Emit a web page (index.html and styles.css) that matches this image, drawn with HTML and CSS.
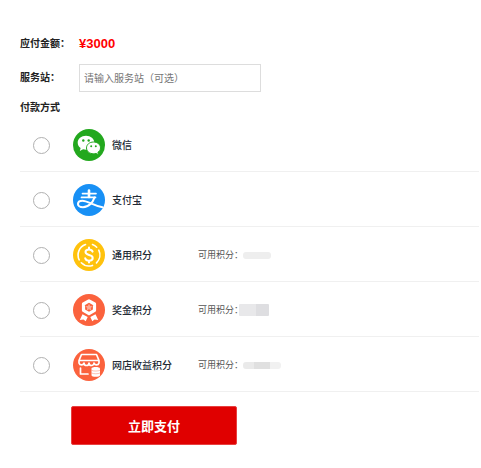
FILE: index.html
```html
<!DOCTYPE html>
<html lang="zh-CN">
<head>
    <meta charset="utf-8">
    <meta name="viewport" content="width=device-width, initial-scale=1">
    <title>立即支付</title>
    <link rel="stylesheet" href="styles.css">
</head>
<body>
    <form class="pay-form">
        <div class="form-row amount-row">
            <span class="form-label">应付金额：</span>
            <span class="amount">¥3000</span>
        </div>
        <div class="form-row">
            <label class="form-label" for="station">服务站：</label>
            <input type="text" class="station-input" id="station" name="station" placeholder="请输入服务站（可选）">
        </div>

        <h2 class="pay-title">付款方式</h2>
        <div class="pay-list">
            <!-- 微信 -->
            <label class="pay-item">
                <input type="radio" class="pay-radio" name="pay_type" value="wechat">
                <svg class="pay-icon" viewBox="0 0 32 32" aria-hidden="true">
                    <circle cx="16" cy="16" r="16" fill="#23a81e"/>
                    <path d="M13 6.800c-4.700 0-8.300 3.100-8.300 6.900 0 2.200 1.100 4.100 2.900 5.300L6.800 22l3.300-1.700c.9.300 1.900.4 2.900.4 4.700 0 8.300-3.100 8.300-6.900S17.700 6.800 13 6.800z" fill="#fff"/>
                    <path d="M20.500 13c-4 0-7 2.600-7 5.900s3 5.900 7 5.900c.9 0 1.700-.1 2.400-.4l2.700 1.400-.7-2.500c1.600-1 2.600-2.600 2.600-4.400 0-3.300-3-5.900-7-5.900z" fill="#fff" stroke="#23a81e"/>
                    <g fill="#23a81e">
                        <circle cx="10.300" cy="11.500" r="1.200"/>
                        <circle cx="15.700" cy="11.500" r="1.200"/>
                        <circle cx="18.200" cy="17.200" r="1"/>
                        <circle cx="22.800" cy="17.200" r="1"/>
                    </g>
                </svg>
                <span class="pay-name">微信</span>
            </label>
            <!-- 支付宝 -->
            <label class="pay-item">
                <input type="radio" class="pay-radio" name="pay_type" value="alipay">
                <svg class="pay-icon" viewBox="0 0 32 32" aria-hidden="true">
                    <circle cx="16" cy="16" r="16" fill="#1890f5"/>
                    <g fill="none" stroke="#fff" stroke-linecap="round">
                        <path d="M9.500 9.600h13.500M8.500 13.400h14" stroke-width="1.700"/>
                        <path d="M16 6.500v6.500" stroke-width="2.600"/>
                        <path d="M21.500 13.500c-1.500 4.500-5.500 9.700-11.500 9.700-3.300 0-5-1.500-5-3.300 0-2 2-3.200 4.500-3.200 5 0 10.500 5 20 6.500" stroke-width="2.100"/>
                    </g>
                </svg>
                <span class="pay-name">支付宝</span>
            </label>
            <!-- 通用积分 -->
            <label class="pay-item">
                <input type="radio" class="pay-radio" name="pay_type" value="common">
                <svg class="pay-icon" viewBox="0 0 32 32" aria-hidden="true">
                    <circle cx="16" cy="16" r="16" fill="#ffc20d"/>
                    <g fill="none" stroke="#fff" stroke-linecap="round">
                        <path d="M12.500 5.600a11 11 0 0 0-6.300 15.300M8.300 23.800a11 11 0 0 0 11.200 2.600M19.500 5.600a11 11 0 0 1 4.200 2.600M25.800 11.200a11 11 0 0 1-2.300 12.700" stroke-width="1.600"/>
                        <path d="M19.600 12.600c-.5-1.500-1.900-2.200-3.600-2.200-2 0-3.500 1-3.500 2.700 0 4 7.200 1.800 7.200 5.800 0 1.700-1.600 2.800-3.700 2.800-1.900 0-3.300-.9-3.800-2.500M16 8.500v1.800M16 21.700v1.900" stroke-width="2"/>
                    </g>
                </svg>
                <span class="pay-name">通用积分</span>
                <span class="points">可用积分：<i class="mask mask-common"></i></span>
            </label>
            <!-- 奖金积分 -->
            <label class="pay-item">
                <input type="radio" class="pay-radio" name="pay_type" value="bonus">
                <svg class="pay-icon" viewBox="0 0 32 32" aria-hidden="true">
                    <circle cx="16" cy="16" r="16" fill="#fb623d"/>
                    <path d="M16 6.800l5.500 3.200v6.400L16 19.600l-5.500-3.200V10z" fill="none" stroke="#fff" stroke-width="3.200" stroke-linejoin="round"/>
                    <path d="M16 9.700l1.100 2.200 2.400.4-1.700 1.700.4 2.400-2.200-1.100-2.200 1.100.4-2.400-1.700-1.700 2.400-.4z" fill="#fff" opacity=".45"/>
                    <path d="M9.500 20.300l5.200 2.600-2 4.300-2.200-1.800-3.700.6zM22.500 20.300l-5.200 2.600 2 4.300 2.200-1.800 3.700.6z" fill="#fff"/>
                </svg>
                <span class="pay-name">奖金积分</span>
                <span class="points">可用积分：<i class="mask mask-bonus"></i></span>
            </label>
            <!-- 网店收益积分 -->
            <label class="pay-item">
                <input type="radio" class="pay-radio" name="pay_type" value="shop">
                <svg class="pay-icon" viewBox="0 0 32 32" aria-hidden="true">
                    <circle cx="16" cy="16" r="16" fill="#fb623d"/>
                    <g fill="none" stroke="#fff" stroke-width="1.700" stroke-linecap="round" stroke-linejoin="round">
                        <path d="M8.500 5.500h15l2.500 6v2.500a2.600 2.600 0 0 1-5 0 2.500 2.500 0 0 1-5 0 2.500 2.500 0 0 1-5 0 2.600 2.600 0 0 1-5 0V11.500zM6 11.500h20"/>
                        <path d="M7.500 19v6h7.500"/>
                    </g>
                    <path d="M18.500 19.500c0-2 8.500-2 8.500 0v6.800c0 2-8.500 2-8.500 0z" fill="#fff"/>
                    <path d="M18.500 21.300c1.800 1 6.700 1 8.500 0M18.500 24c1.800 1 6.700 1 8.500 0" fill="none" stroke="#fb623d" stroke-width=".4"/>
                </svg>
                <span class="pay-name">网店收益积分</span>
                <span class="points">可用积分：<i class="mask mask-shop"></i></span>
            </label>
        </div>

        <button type="submit" class="pay-btn">立即支付</button>
    </form>
</body>
</html>
```
FILE: styles.css
```css
* {
    box-sizing: border-box;
}
body {
    margin: 0;
    background-color: #fff;
    color: #222;
    font-family: "Liberation Sans", "Noto Sans CJK SC", sans-serif;
    font-size: 10px;
    line-height: 16px;
}
.pay-form {
    padding: 36px 2px 24px 20px;
}
.form-row {
    display: flex;
    align-items: center;
}
.amount-row {
    margin-bottom: 12px;
}
.form-label {
    width: 59px;
    font-weight: bold;
}
.amount {
    color: #f00;
    font-size: 13px;
    font-weight: bold;
}
.station-input {
    width: 182px;
    height: 28px;
    padding: 0 4px;
    border: 1px solid #ddd;
    color: #333;
    font: inherit;
}
.station-input::placeholder {
    color: #757575;
}
.pay-title {
    margin: 8px 0 1px;
    font-size: 10px;
    font-weight: bold;
}
.pay-item {
    display: flex;
    align-items: center;
    height: 55px;
    padding: 2px 0 0 13px;
    border-bottom: 1px solid #f0f0f0;
}
.pay-radio {
    appearance: none;
    width: 17px;
    height: 17px;
    margin: 0 23px 0 0;
    border: 1px solid #b0b0b0;
    border-radius: 50%;
    background-color: #fff;
}
.pay-radio:checked {
    border: 5px solid #e00000;
}
.pay-icon {
    width: 32px;
    height: 32px;
    margin-right: 7px;
}
.pay-name {
    width: 86px;
    padding-top: 1px;
    color: #222a35;
    font-weight: 500;
}
.points {
    display: flex;
    align-items: center;
    color: #555;
    font-size: 9px;
}
/* 打码的积分数 */
.mask {
    height: 7px;
    border-radius: 3px;
    background-color: #eee;
}
.mask-common {
    width: 28px;
}
.mask-bonus {
    width: 30px;
    height: 12px;
    margin-left: -4px;
    border-radius: 1px;
    background: linear-gradient(to right, #e8e8ea 55%, #dedee1 55%);
}
.mask-shop {
    width: 38px;
    background: linear-gradient(to right, #eaeaea 30%, #e0e0e0 30%, #e0e0e0 72%, #f1f1f1 72%);
}
.pay-btn {
    display: block;
    width: 166px;
    height: 39px;
    margin: 14px 0 0 51px;
    border: 1px solid #e84040;
    border-radius: 2px;
    background-color: #e00000;
    color: #fff;
    font-family: inherit;
    font-size: 13px;
    font-weight: bold;
    cursor: pointer;
}
```
